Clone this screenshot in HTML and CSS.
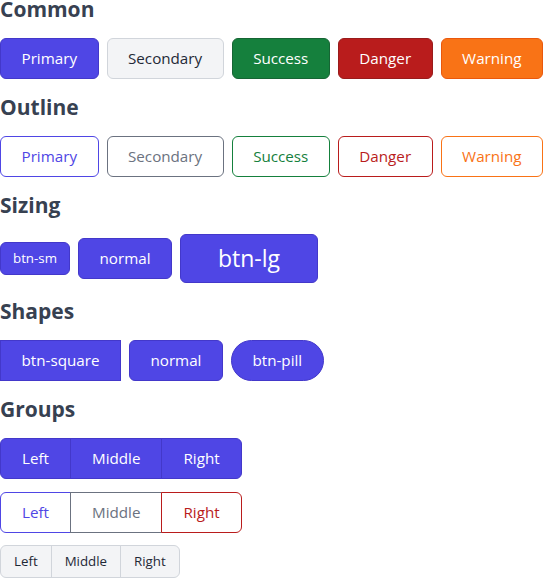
FILE: index.html
```html
<!DOCTYPE html>
<html lang="en">
<head>
<meta charset="utf-8">
<title>Buttons</title>
<link rel="stylesheet" href="styles.css">
</head>
<body>
<div class="page">
  <section class="section">
    <h2 class="title">Common</h2>
    <div class="row">
      <button class="btn btn-primary">Primary</button>
      <button class="btn btn-secondary">Secondary</button>
      <button class="btn btn-success">Success</button>
      <button class="btn btn-danger">Danger</button>
      <button class="btn btn-warning">Warning</button>
    </div>
  </section>
  <section class="section">
    <h2 class="title">Outline</h2>
    <div class="row">
      <button class="btn btn-outline-primary">Primary</button>
      <button class="btn btn-outline-secondary">Secondary</button>
      <button class="btn btn-outline-success">Success</button>
      <button class="btn btn-outline-danger">Danger</button>
      <button class="btn btn-outline-warning">Warning</button>
    </div>
  </section>
  <section class="section">
    <h2 class="title">Sizing</h2>
    <div class="row">
      <button class="btn btn-primary btn-sm">btn-sm</button>
      <button class="btn btn-primary">normal</button>
      <button class="btn btn-primary btn-lg">btn-lg</button>
    </div>
  </section>
  <section class="section">
    <h2 class="title">Shapes</h2>
    <div class="row">
      <button class="btn btn-primary btn-square">btn-square</button>
      <button class="btn btn-primary">normal</button>
      <button class="btn btn-primary btn-pill">btn-pill</button>
    </div>
  </section>
  <section class="section">
    <h2 class="title">Groups</h2>
    <div class="groups">
      <div class="btn-group">
        <button class="btn btn-primary">Left</button>
        <button class="btn btn-primary">Middle</button>
        <button class="btn btn-primary">Right</button>
      </div>
      <div class="btn-group">
        <button class="btn btn-outline-primary">Left</button>
        <button class="btn btn-outline-secondary">Middle</button>
        <button class="btn btn-outline-danger">Right</button>
      </div>
      <div class="btn-group">
        <button class="btn btn-secondary btn-sm">Left</button>
        <button class="btn btn-secondary btn-sm">Middle</button>
        <button class="btn btn-secondary btn-sm">Right</button>
      </div>
    </div>
  </section>
</div>
</body>
</html>
```
FILE: styles.css
```css
html, body {
  margin: 0;
  padding: 0;
  background: #ffffff;
}
body {
  font-family: "Open Sans", "Noto Sans", sans-serif;
  color: #1f2937;
}
.page {
  margin-top: -5px;
}
.section {
  margin-bottom: 14px;
}
.title {
  margin: 0 0 15px;
  font-size: 21px;
  line-height: 28px;
  font-weight: 700;
  color: #374151;
}
.row {
  display: flex;
  align-items: center;
  gap: 8px;
}
.btn {
  font-family: inherit;
  font-size: 15.2px;
  line-height: 23px;
  padding: 8px 20.5px;
  border: 1px solid transparent;
  border-radius: 6px;
  background: #ffffff;
  color: #1f2937;
  cursor: pointer;
  margin: 0;
}
.btn-primary { background: #4f46e5; border-color: #4338ca; color: #ffffff; }
.btn-secondary { background: #f3f4f6; border-color: #d1d5db; color: #1f2937; }
.btn-success { background: #15803d; border-color: #166534; color: #ffffff; }
.btn-danger { background: #b91c1c; border-color: #991b1b; color: #ffffff; }
.btn-warning { background: #f97316; border-color: #ea580c; color: #ffffff; }

.btn-outline-primary { background: #ffffff; border-color: #4f46e5; color: #4f46e5; }
.btn-outline-secondary { background: #ffffff; border-color: #6b7280; color: #6b7280; }
.btn-outline-success { background: #ffffff; border-color: #15803d; color: #15803d; }
.btn-outline-danger { background: #ffffff; border-color: #b91c1c; color: #b91c1c; }
.btn-outline-warning { background: #ffffff; border-color: #f97316; color: #f97316; }

.btn-sm {
  font-size: 13.3px;
  line-height: 21px;
  padding: 5px 12px;
}
.btn-lg {
  font-size: 23px;
  line-height: 29px;
  padding: 9px 37px;
}
.btn-square { border-radius: 0; }
.btn-pill { border-radius: 9999px; }

.groups {
  display: flex;
  flex-direction: column;
  align-items: flex-start;
  gap: 12.5px;
}
.btn-group {
  display: flex;
}
.btn-group .btn {
  border-radius: 0;
  padding-left: 21px;
  padding-right: 21px;
}
.btn-group .btn-sm {
  padding-left: 13px;
  padding-right: 13px;
}
.btn-group .btn + .btn {
  margin-left: -1px;
}
.btn-group .btn:first-child {
  border-top-left-radius: 6px;
  border-bottom-left-radius: 6px;
}
.btn-group .btn:last-child {
  border-top-right-radius: 6px;
  border-bottom-right-radius: 6px;
}
```
